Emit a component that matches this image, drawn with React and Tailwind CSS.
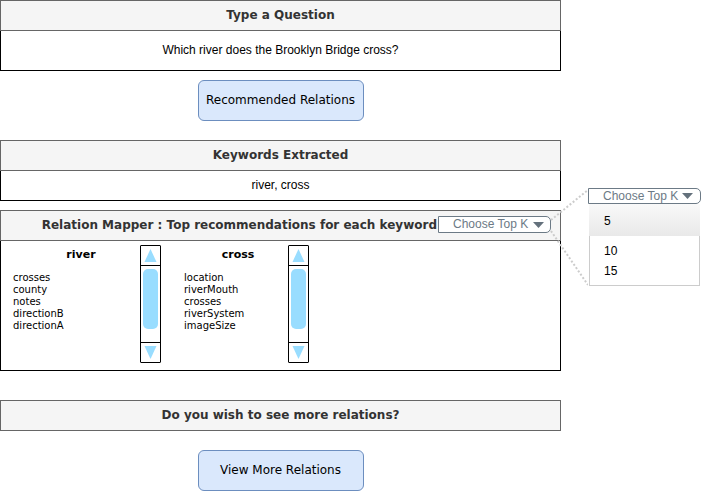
import React from "react";

const sans = "font-['DejaVu_Sans',Verdana,sans-serif]";
const arial = "font-['Liberation_Sans',Arial,sans-serif]";

const options = ["5", "10", "15"];

const mappings = [
  {
    keyword: "river",
    width: "w-[139px]",
    titlePad: "pl-[21px]",
    listPad: "pl-3",
    relations: ["crosses", "county", "notes", "directionB", "directionA"],
  },
  {
    keyword: "cross",
    width: "w-[127px]",
    titlePad: "pl-[27px]",
    listPad: "pl-[23px]",
    relations: ["location", "riverMouth", "crosses", "riverSystem", "imageSize"],
  },
];

function SectionHeader({ children, className = "justify-center" }) {
  return (
    <div className={`flex h-[31px] items-center border border-[#666666] bg-[#f5f5f5] pb-0.5 ${className}`}>
      {children}
    </div>
  );
}

function SectionTitle({ children }) {
  return (
    <h2 className={`${sans} text-[12px] leading-4 font-bold whitespace-nowrap text-[#333333]`}>
      {children}
    </h2>
  );
}

function ActionButton({ children }) {
  return (
    <button
      type="button"
      className={`${sans} h-[41px] w-[166px] self-center rounded-md border border-[#6c8ebf] bg-[#dae8fc] pb-0.5 text-[12px] leading-4 whitespace-nowrap text-black`}
    >
      {children}
    </button>
  );
}

function Caret() {
  return (
    <svg className="h-[6px] w-[11px] shrink-0" viewBox="0 0 11 6" aria-hidden="true">
      <path d="M0 0H11L5.5 6Z" fill="#64717c" />
    </svg>
  );
}

function Scrollbar({ label }) {
  return (
    <div className="flex h-[118px] w-[21px] flex-col rounded-[1px] border border-black bg-white">
      <button
        type="button"
        aria-label={`Scroll ${label} up`}
        className="flex h-5 items-center justify-center border-b border-black"
      >
        <svg className="h-[13px] w-[13px]" viewBox="0 0 13 13" aria-hidden="true">
          <path d="M6.5 0L12.5 13H0.5Z" fill="#99ddff" />
        </svg>
      </button>
      <div className="flex flex-1 justify-center pt-[3px]">
        <div className="h-[60px] w-[15px] rounded-[5px] bg-[#99ddff]" />
      </div>
      <button
        type="button"
        aria-label={`Scroll ${label} down`}
        className="flex h-5 items-center justify-center border-t border-black"
      >
        <svg className="h-[13px] w-[13px]" viewBox="0 0 13 13" aria-hidden="true">
          <path d="M0.5 0H12.5L6.5 13Z" fill="#99ddff" />
        </svg>
      </button>
    </div>
  );
}

function TopKSelect() {
  return (
    <div className="relative flex items-center">
      <select
        aria-label="Choose Top K"
        defaultValue=""
        className={`${arial} h-[17px] w-[113px] appearance-none rounded-r-[5px] border border-[#6c7a86] bg-white pl-[14px] text-[12px] leading-[15px] text-[#6c7a86]`}
      >
        <option value="">Choose Top K</option>
        {options.map((o) => (
          <option key={o}>{o}</option>
        ))}
      </select>
      <div className="pointer-events-none absolute right-[7px]">
        <Caret />
      </div>
    </div>
  );
}

function TopKMenu() {
  return (
    <div className={`${arial} text-[12px]`}>
      <button
        type="button"
        aria-haspopup="listbox"
        aria-expanded="true"
        className="flex h-4 w-full items-center justify-between rounded-r-[5px] border border-[#6c7a86] bg-white pr-[7px] pl-[14px] leading-[14px] whitespace-nowrap text-[#6c7a86]"
      >
        Choose Top K
        <Caret />
      </button>
      <ul role="listbox" aria-label="Top K" className="mx-px border border-t-0 border-[#cccccc] pb-1 text-black">
        {options.map((o, i) => (
          <li
            key={o}
            role="option"
            aria-selected={i === 0}
            className={
              i === 0
                ? "-mx-px mb-[5px] flex h-8 items-center bg-linear-to-b from-[#f9f9f9] to-[#e9e9e9] pt-0.5 pl-[15px]"
                : "flex h-5 items-center pl-[14px]"
            }
          >
            {o}
          </li>
        ))}
      </ul>
    </div>
  );
}

export default function App() {
  return (
    <div className="flex bg-white">
      <main className="flex min-w-0 flex-1 flex-col">
        <section>
          <SectionHeader>
            <label htmlFor="question">
              <SectionTitle>Type a Question</SectionTitle>
            </label>
          </SectionHeader>
          <div className="flex h-10 border border-t-0 border-black">
            <input
              id="question"
              type="text"
              defaultValue="Which river does the Brooklyn Bridge cross?"
              className={`${arial} w-full bg-transparent pb-0.5 text-center text-[12px] text-black outline-none`}
            />
          </div>
        </section>

        <div className="flex flex-col pt-[9px] pb-[19px]">
          <ActionButton>Recommended Relations</ActionButton>
        </div>

        <section>
          <SectionHeader>
            <SectionTitle>Keywords Extracted</SectionTitle>
          </SectionHeader>
          <p className={`${arial} border border-t-0 border-black text-center text-[12px] leading-[29px] text-black`}>
            river, cross
          </p>
        </section>

        <section className="pt-[9px]">
          <SectionHeader className="justify-end gap-px pr-[9px]">
            <SectionTitle>Relation Mapper : Top recommendations for each keyword</SectionTitle>
            <TopKSelect />
          </SectionHeader>
          <div className={`${sans} flex h-[130px] border border-t-0 border-black pt-1 text-black`}>
            {mappings.map((m) => (
              <React.Fragment key={m.keyword}>
                <div className={m.width}>
                  <h3 className={`${m.titlePad} text-center text-[11px] leading-5 font-bold`}>
                    {m.keyword}
                  </h3>
                  <ul className={`${m.listPad} pt-[7px] text-[10px] leading-3`}>
                    {m.relations.map((r) => (
                      <li key={r}>{r}</li>
                    ))}
                  </ul>
                </div>
                <Scrollbar label={m.keyword} />
              </React.Fragment>
            ))}
          </div>
        </section>

        <section className="pt-[29px]">
          <SectionHeader>
            <SectionTitle>Do you wish to see more relations?</SectionTitle>
          </SectionHeader>
        </section>

        <div className="flex flex-col pt-[19px]">
          <ActionButton>View More Relations</ActionButton>
        </div>
      </main>

      <aside className="w-[140px] shrink-0 pt-[188px] pl-[27px]">
        <div className="relative">
          <TopKMenu />
          <svg
            className="pointer-events-none absolute top-0 right-full h-[98px] w-[38px]"
            viewBox="0 0 38 98"
            aria-hidden="true"
          >
            <path
              d="M1 32L38 2M1 43L38 97"
              fill="none"
              stroke="#cccccc"
              strokeWidth="2"
              strokeDasharray="2 2"
            />
          </svg>
        </div>
      </aside>
    </div>
  );
}
